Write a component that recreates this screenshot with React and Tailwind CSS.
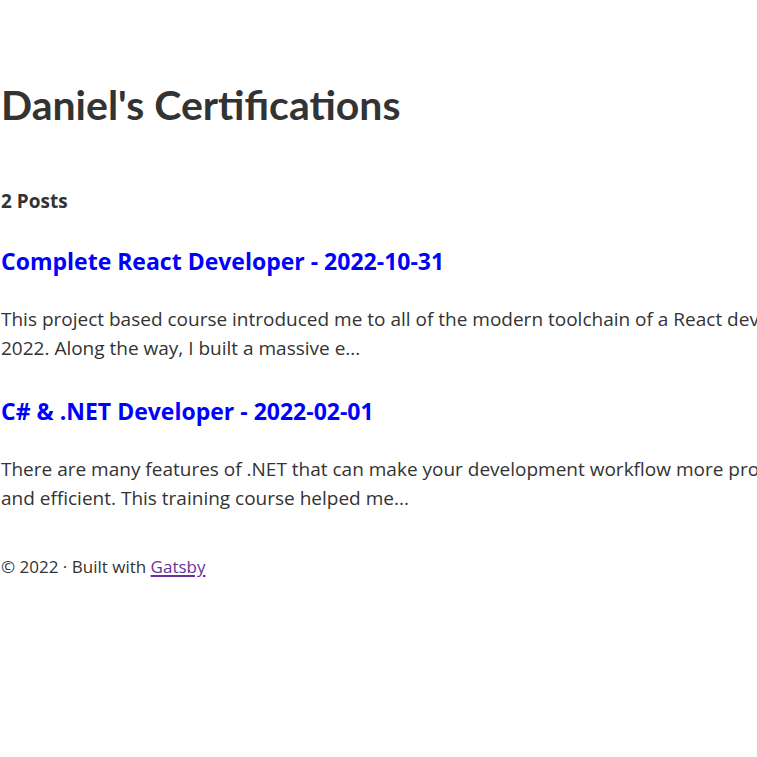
import React from "react";

const posts = [
  {
    title: "Complete React Developer - 2022-10-31",
    excerpt:
      "This project based course introduced me to all of the modern toolchain of a React developer in 2022. Along the way, I built a massive e...",
  },
  {
    title: "C# & .NET Developer - 2022-02-01",
    excerpt:
      "There are many features of .NET that can make your development workflow more productive and efficient. This training course helped me...",
  },
];

export default function App() {
  return (
    <div className="min-h-screen w-full overflow-hidden bg-white text-[#333333] font-['Open_Sans','Liberation_Sans',sans-serif]">
      <div className="w-[840px] pt-[80px] pl-[1px]">
        {/* Header */}
        <h1 className="text-[41px] leading-[50px] font-bold font-['Lato','Open_Sans',sans-serif]">
          Daniel's Certifications
        </h1>

        <main className="mt-[57px]">
          <h4 className="text-[19px] leading-[29px] font-bold">{posts.length} Posts</h4>

          {posts.map((post, i) => (
            <article key={i} className={i === 0 ? "mt-[31px]" : "mt-[34px]"}>
              <h2 className="text-[23px] leading-[28px] font-bold text-[#0000ff]">{post.title}</h2>
              <p className="mt-[30px] text-[19px] leading-[29px]">{post.excerpt}</p>
            </article>
          ))}
        </main>

        {/* Footer */}
        <footer className="mt-[42px] text-[17px] leading-[24px]">
          © 2022 · Built with{" "}
          <a href="#" className="text-[#663399] underline decoration-2 underline-offset-2">Gatsby</a>
        </footer>
      </div>
    </div>
  );
}
